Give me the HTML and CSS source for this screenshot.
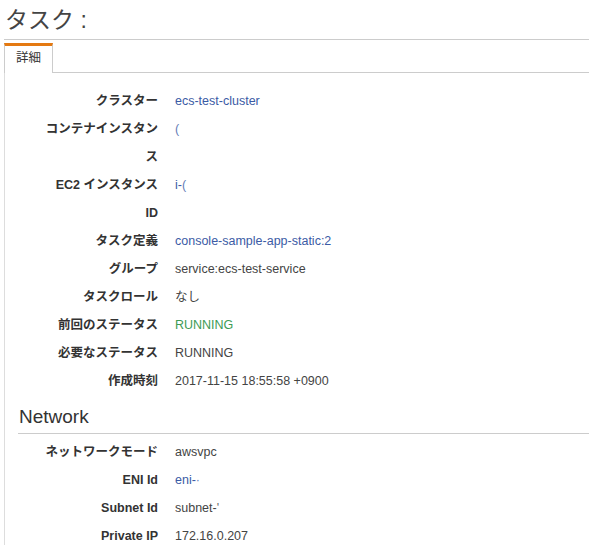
FILE: index.html
```html
<!DOCTYPE html>
<html lang="ja">
<head>
    <meta charset="UTF-8">
    <title>タスク</title>
    <link rel="stylesheet" href="styles.css">
</head>
<body>
    <div class="page-header">
        <h1>タスク :</h1>
    </div>

    <div class="tabs">
        <div class="tab active">詳細</div>
    </div>

    <div class="panel">
        <dl class="details">
            <dt>クラスター</dt>
            <dd><a href="#">ecs-test-cluster</a></dd>
            <dt>コンテナインスタンス</dt>
            <dd><a href="#" class="thin">(</a></dd>
            <dt>EC2 インスタンス ID</dt>
            <dd><a href="#">i-<span class="thin">(</span></a></dd>
            <dt>タスク定義</dt>
            <dd><a href="#">console-sample-app-static:2</a></dd>
            <dt>グループ</dt>
            <dd>service:ecs-test-service</dd>
            <dt>タスクロール</dt>
            <dd>なし</dd>
            <dt>前回のステータス</dt>
            <dd class="ok">RUNNING</dd>
            <dt>必要なステータス</dt>
            <dd>RUNNING</dd>
            <dt>作成時刻</dt>
            <dd>2017-11-15 18:55:58 +0900</dd>
        </dl>

        <h2 class="section-title">Network</h2>

        <dl class="details network">
            <dt>ネットワークモード</dt>
            <dd>awsvpc</dd>
            <dt>ENI Id</dt>
            <dd><a href="#">eni-<span class="thin">·</span></a></dd>
            <dt>Subnet Id</dt>
            <dd>subnet-<span class="thin">'</span></dd>
            <dt>Private IP</dt>
            <dd>172.16.0.207</dd>
        </dl>
    </div>
</body>
</html>
```

FILE: styles.css
```css
body {
    margin: 0;
    background-color: #fff;
    color: #444;
    font-family: "Liberation Sans", "Noto Sans CJK JP", sans-serif;
    font-size: 12.5px;
}

.page-header {
    margin-left: 4px;
    border-bottom: 1px solid #ccc;
}

.page-header h1 {
    margin: 0;
    padding: 4px 0 3px 1px;
    font-size: 23px;
    line-height: 32px;
    font-weight: normal;
    color: #444;
}

/* tab strip */
.tabs {
    display: flex;
    margin: 3px 0 0 4px;
    border-bottom: 1px solid #ccc;
}

.tab {
    padding: 3px 11px 6px;
    line-height: 18px;
    color: #333;
    background-color: #fff;
    border: 1px solid #ccc;
    border-top: 3px solid #e47911;
    border-bottom: none;
    margin-bottom: -1px;
}

.panel {
    margin-left: 4px;
    border-left: 1px solid #ddd;
    padding-top: 14px;
    padding-bottom: 20px;
}

/* label / value rows */
.details {
    display: grid;
    grid-template-columns: 116px 1fr;
    column-gap: 17px;
    margin: 0;
    padding-left: 37px;
    line-height: 28px;
}

.details dt {
    text-align: right;
    font-weight: bold;
    color: #333;
}

.details dd {
    margin: 0;
    white-space: nowrap;
}

.details a {
    color: #3b5ba5;
    text-decoration: none;
}

.details .ok {
    color: #3d9b55;
}

.thin {
    font-weight: 300;
    opacity: 0.8;
}

.section-title {
    margin: 10px 0 0 13px;
    padding: 0 0 4px 1px;
    font-size: 19px;
    line-height: 24px;
    font-weight: normal;
    color: #333;
    border-bottom: 1px solid #ccc;
}

.network {
    margin-top: 4px;
}
```
